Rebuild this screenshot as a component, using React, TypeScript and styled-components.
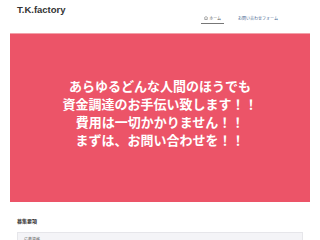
import React from "react";
import styled, { createGlobalStyle } from "styled-components";

const Global = createGlobalStyle`
  html, body { margin: 0; padding: 0; background: #fff; }
  body { font-family: "Noto Sans CJK JP", "Liberation Sans", sans-serif; width: 320px; height: 240px; overflow: hidden; }
`;

const Page = styled.div`
  width: 320px;
  display: flex;
  flex-direction: column;
`;

const Header = styled.header`
  display: flex;
  justify-content: space-between;
  align-items: flex-start;
  padding: 4px 39px 0 17px;
  height: 30px;
  box-sizing: border-box;
`;

const Logo = styled.div`
  font-family: "Liberation Sans", Arial, sans-serif;
  font-weight: bold;
  font-size: 9.5px;
  color: #333;
  line-height: 12px;
`;

const Nav = styled.nav`
  display: flex;
  gap: 11px;
  margin-top: 11px;
`;

const NavItem = styled.a<{ $active?: boolean }>`
  font-size: 4px;
  line-height: 6px;
  color: ${(p) => (p.$active ? "#555" : "#3b5e8c")};
  padding: 0 3px 2px;
  border-bottom: 1px solid ${(p) => (p.$active ? "#777" : "transparent")};
  display: flex;
  align-items: center;
  gap: 1px;
`;

const Hero = styled.section`
  margin: 3px 10px 0;
  height: 169px;
  padding-bottom: 10px;
  background: #ec5468;
  border-top: 1px solid #f2a0a8;
  display: flex;
  align-items: center;
  justify-content: center;
  box-sizing: border-box;
`;

const HeroText = styled.p`
  margin: 0;
  color: #fff;
  font-weight: bold;
  font-size: 13px;
  line-height: 18px;
  text-align: center;
`;

const Section = styled.section`
  padding: 15px 17px 0;
`;

const SectionTitle = styled.h2`
  margin: 0 0 8px;
  font-size: 5px;
  line-height: 7px;
  font-weight: bold;
  color: #333;
`;

const Box = styled.div`
  background: #f4f4f7;
  border: 1px solid #e6e6ea;
  height: 20px;
  padding: 3px 6px;
  font-size: 4px;
  line-height: 6px;
  color: #666;
  box-sizing: border-box;
`;

export default function App() {
  return (
    <>
      <Global />
      <Page>
        <Header>
          <Logo>T.K.factory</Logo>
          <Nav>
            <NavItem $active>
              <svg width="4" height="4" viewBox="0 0 10 10">
                <path d="M1 5 L5 1 L9 5 M2 4.5 V9 H8 V4.5" fill="none" stroke="#666" strokeWidth="1.5" />
              </svg>
              ホーム
            </NavItem>
            <NavItem>お問い合わせフォーム</NavItem>
          </Nav>
        </Header>
        <Hero>
          <HeroText>
            あらゆるどんな人間のほうでも
            <br />
            資金調達のお手伝い致します！！
            <br />
            費用は一切かかりません！！
            <br />
            まずは、お問い合わせを！！
          </HeroText>
        </Hero>
        <Section>
          <SectionTitle>募集要項</SectionTitle>
          <Box>応募資格</Box>
        </Section>
      </Page>
    </>
  );
}
